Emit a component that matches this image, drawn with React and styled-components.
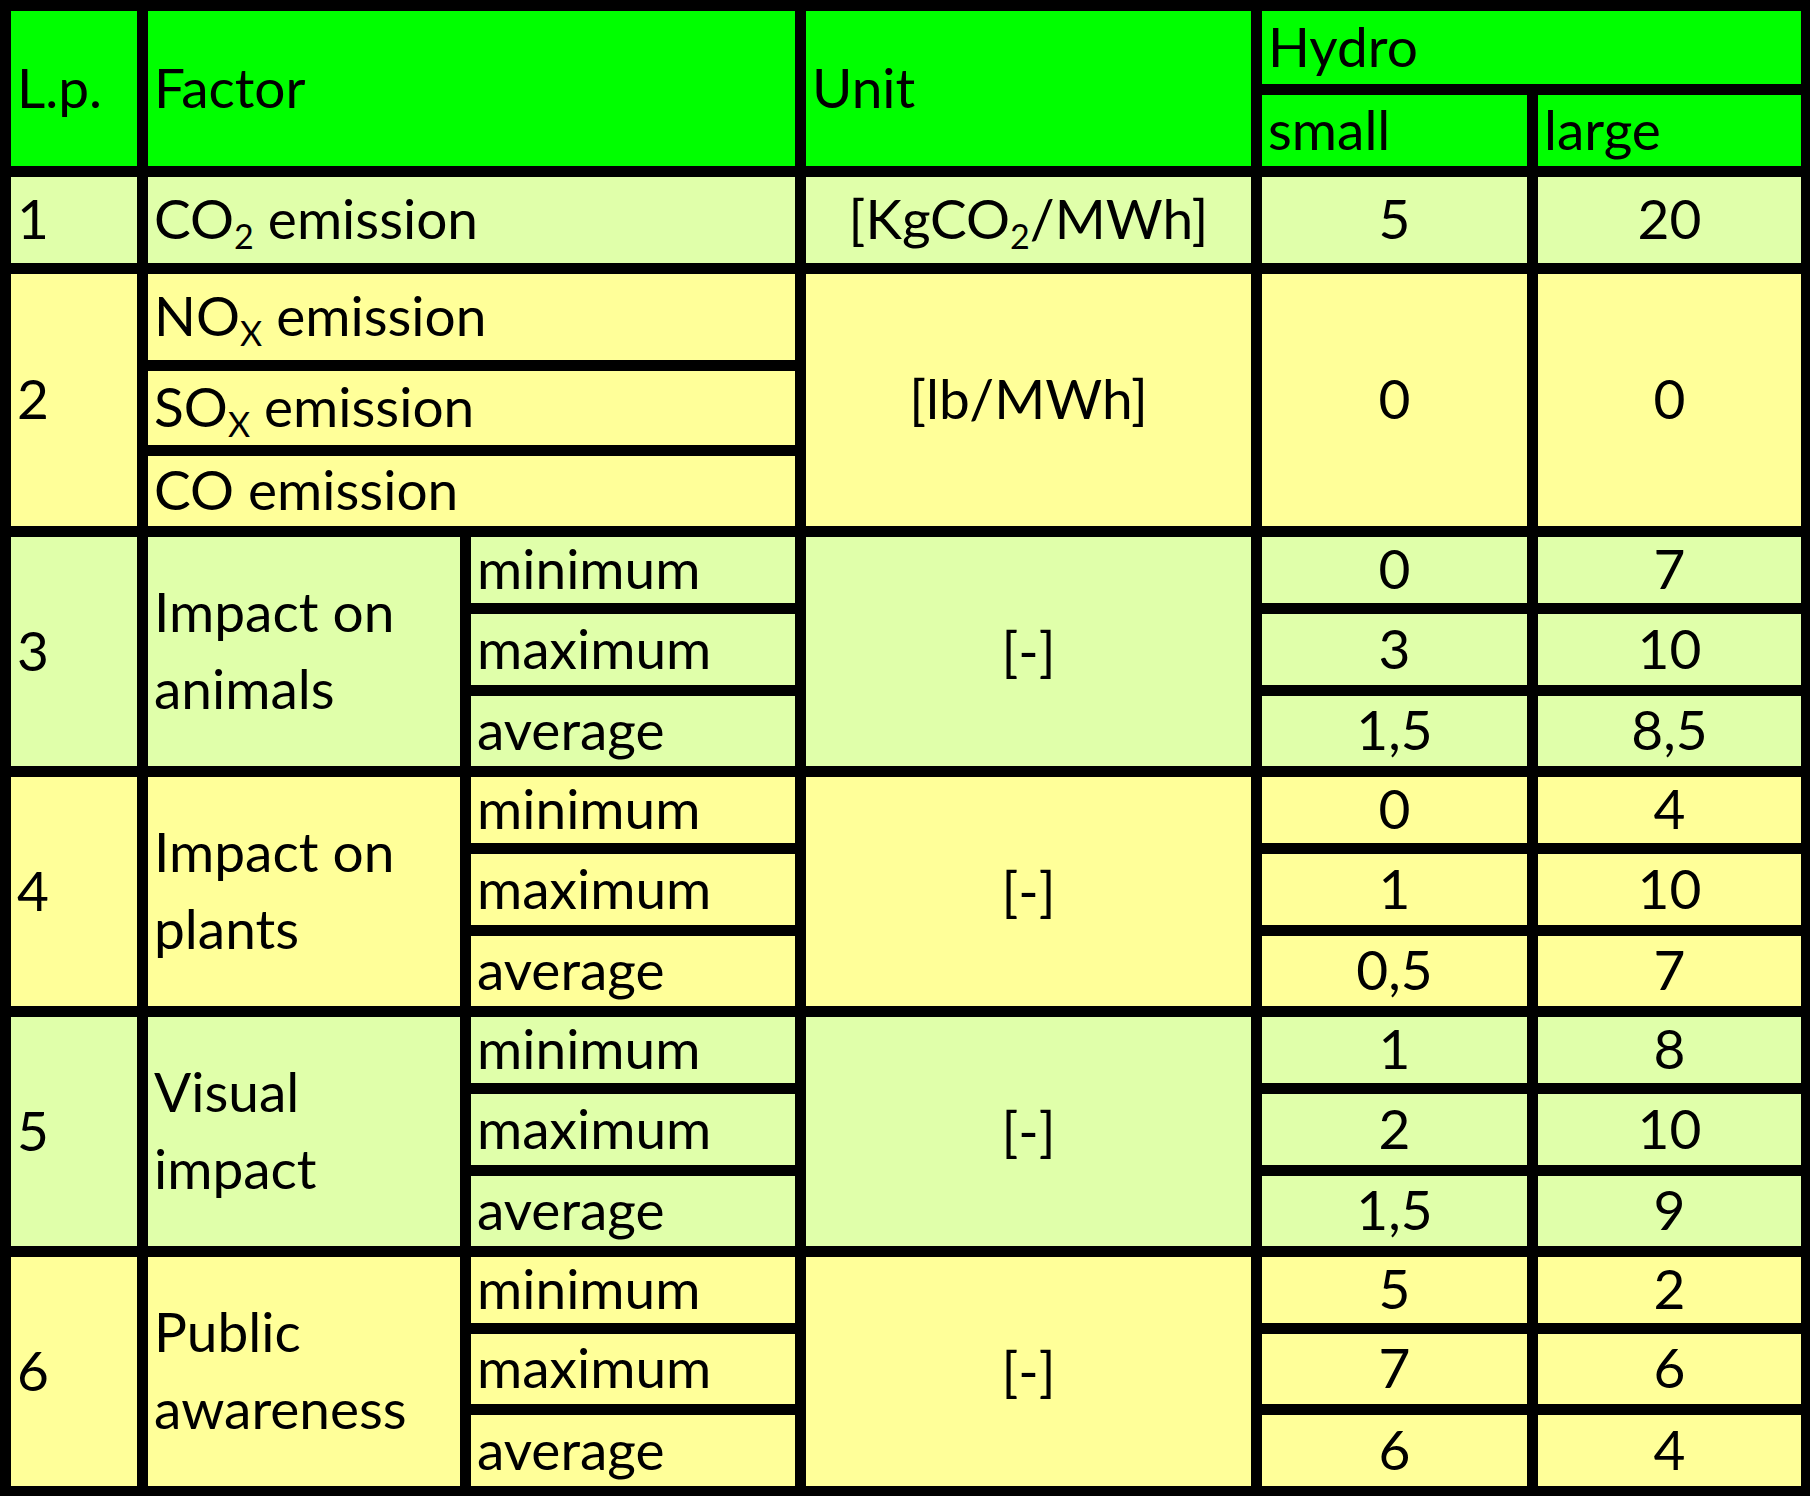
import styled, { createGlobalStyle } from "styled-components";

const GREEN = "#00ff00";
const LIME = "#e0ffaa";
const YELLOW = "#ffff99";

const GlobalStyle = createGlobalStyle`
  html, body {
    margin: 0;
    padding: 0;
    background: #000;
  }
`;

const Sheet = styled.div`
  display: grid;
  grid-template-columns: 126px 312px 324px 445px 265px 263px;
  grid-template-rows:
    73px 71px 86px 86px 74px 70px
    66px 71px 70px 66px 71px 70px
    66px 71px 70px 66px 70px 71px;
  gap: 11px;
  width: 1810px;
  height: 1496px;
  box-sizing: border-box;
  padding: 11px 9px 10px 11px;
  background: #000;
  font-family: Lato, "Liberation Sans", sans-serif;
  color: #000;
`;

const Cell = styled.div`
  grid-column: ${(p) => p.$col};
  grid-row: ${(p) => p.$row};
  background: ${(p) => p.$bg};
  display: flex;
  align-items: center;
  justify-content: ${(p) => (p.$center ? "center" : "flex-start")};
  padding: 0 6px 4px;
  min-height: 0;
  font-size: 55px;
  line-height: ${(p) => p.$lh || "56px"};
  white-space: nowrap;
`;

const Text = styled.span`
  display: block;
`;

const Sub = styled.sub`
  font-size: 0.62em;
  vertical-align: -0.3em;
  line-height: 0;
`;

const groups = [
  { n: 3, label: ["Impact on", "animals"], bg: LIME, small: ["0", "3", "1,5"], large: ["7", "10", "8,5"] },
  { n: 4, label: ["Impact on", "plants"], bg: YELLOW, small: ["0", "1", "0,5"], large: ["4", "10", "7"] },
  { n: 5, label: ["Visual", "impact"], bg: LIME, small: ["1", "2", "1,5"], large: ["8", "10", "9"] },
  { n: 6, label: ["Public", "awareness"], bg: YELLOW, small: ["5", "7", "6"], large: ["2", "6", "4"] },
];

const stats = ["minimum", "maximum", "average"];

export default function App() {
  return (
    <>
      <GlobalStyle />
      <Sheet>
        <Cell $col="1" $row="1 / 3" $bg={GREEN}>L.p.</Cell>
        <Cell $col="2 / 4" $row="1 / 3" $bg={GREEN}>Factor</Cell>
        <Cell $col="4" $row="1 / 3" $bg={GREEN}>Unit</Cell>
        <Cell $col="5 / 7" $row="1" $bg={GREEN}>Hydro</Cell>
        <Cell $col="5" $row="2" $bg={GREEN}>small</Cell>
        <Cell $col="6" $row="2" $bg={GREEN}>large</Cell>

        <Cell $col="1" $row="3" $bg={LIME}>1</Cell>
        <Cell $col="2 / 4" $row="3" $bg={LIME}>
          <Text>CO<Sub>2</Sub> emission</Text>
        </Cell>
        <Cell $col="4" $row="3" $bg={LIME} $center>
          <Text>[KgCO<Sub>2</Sub>/MWh]</Text>
        </Cell>
        <Cell $col="5" $row="3" $bg={LIME} $center>5</Cell>
        <Cell $col="6" $row="3" $bg={LIME} $center>20</Cell>

        <Cell $col="1" $row="4 / 7" $bg={YELLOW}>2</Cell>
        <Cell $col="2 / 4" $row="4" $bg={YELLOW}>
          <Text>NO<Sub>X</Sub> emission</Text>
        </Cell>
        <Cell $col="2 / 4" $row="5" $bg={YELLOW}>
          <Text>SO<Sub>X</Sub> emission</Text>
        </Cell>
        <Cell $col="2 / 4" $row="6" $bg={YELLOW}>CO emission</Cell>
        <Cell $col="4" $row="4 / 7" $bg={YELLOW} $center>[lb/MWh]</Cell>
        <Cell $col="5" $row="4 / 7" $bg={YELLOW} $center>0</Cell>
        <Cell $col="6" $row="4 / 7" $bg={YELLOW} $center>0</Cell>

        {groups.map((g, i) => {
          const start = 7 + i * 3;
          const span = `${start} / ${start + 3}`;
          return [
            <Cell key={`n${i}`} $col="1" $row={span} $bg={g.bg}>{g.n}</Cell>,
            <Cell key={`l${i}`} $col="2" $row={span} $bg={g.bg} $lh="77px">
              <Text>
                {g.label[0]}
                <br />
                {g.label[1]}
              </Text>
            </Cell>,
            <Cell key={`u${i}`} $col="4" $row={span} $bg={g.bg} $center>[-]</Cell>,
            ...stats.map((s, j) => [
              <Cell key={`s${i}${j}`} $col="3" $row={`${start + j}`} $bg={g.bg}>{s}</Cell>,
              <Cell key={`a${i}${j}`} $col="5" $row={`${start + j}`} $bg={g.bg} $center>{g.small[j]}</Cell>,
              <Cell key={`b${i}${j}`} $col="6" $row={`${start + j}`} $bg={g.bg} $center>{g.large[j]}</Cell>,
            ]),
          ];
        })}
      </Sheet>
    </>
  );
}
